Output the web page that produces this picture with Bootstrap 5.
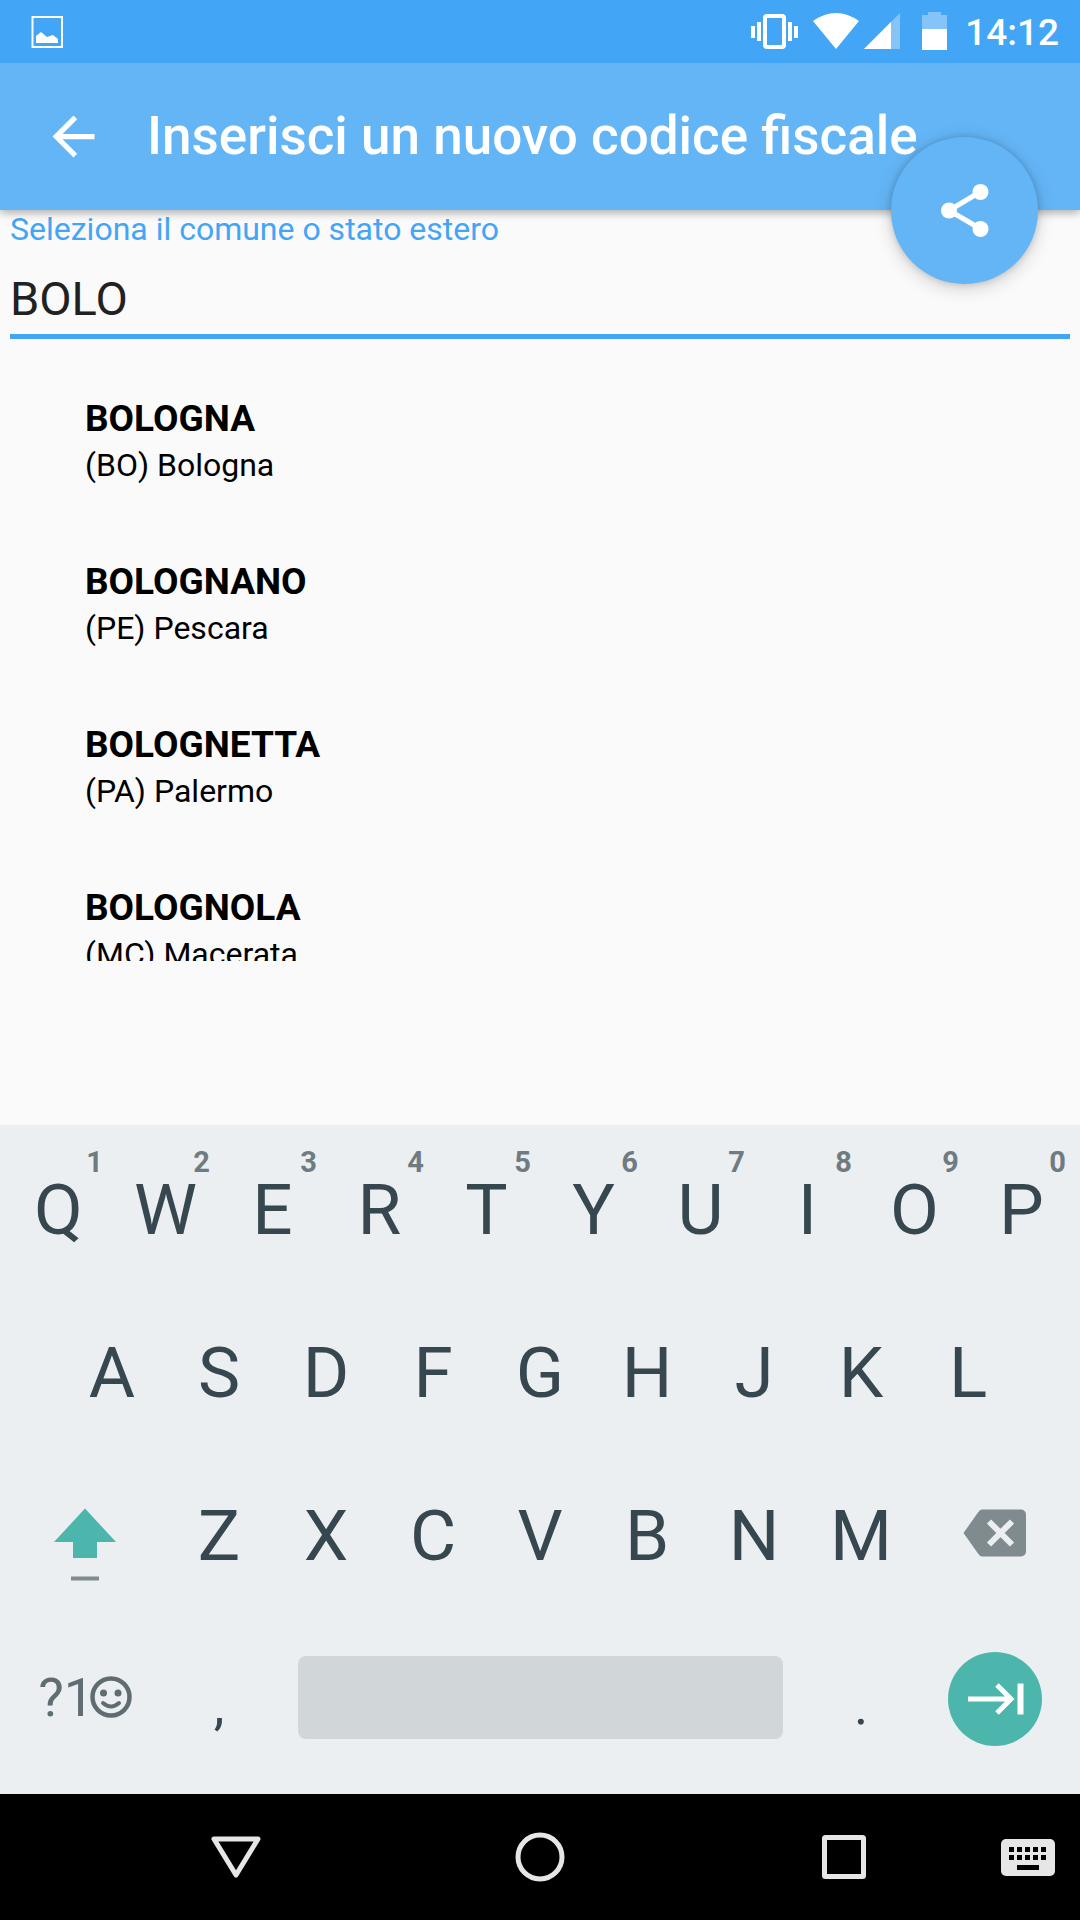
<!DOCTYPE html>
<html lang="it">
<head>
<meta charset="utf-8">
<meta name="viewport" content="width=device-width, initial-scale=1">
<title>Inserisci un nuovo codice fiscale</title>
<link href="https://cdn.jsdelivr.net/npm/bootstrap@5.3.0/dist/css/bootstrap.min.css" rel="stylesheet">
<style>
  body { font-family: Roboto, "Noto Sans", sans-serif; background: #fafafa; color: #000; }
  svg { display: block; flex: none; }
  .statusbar { height: 63px; padding: 0 21px 0 31px; background: #42a5f5; color: #fff; z-index: 3; }
  .clock { font-size: 37px; font-weight: 500; line-height: 40px; padding-top: 3px; margin-left: 16px; }
  .appbar { height: 147px; padding: 0 42px; gap: 42px; background: #64b5f6; color: #fff; box-shadow: 0 3px 8px rgba(0,0,0,.3); z-index: 2; }
  .appbar h1 { font-size: 53px; font-weight: 500; line-height: 64px; padding-bottom: 2px; white-space: nowrap; }
  .plain { border: 0; padding: 0; background: none; color: inherit; }
  .fab { width: 147px; height: 147px; right: 42px; top: 74px; border: 0; background: #64b5f6; box-shadow: 0 4px 18px rgba(0,0,0,.18), 0 0 6px rgba(0,0,0,.16); }
  .field-label { font-size: 32px; line-height: 38px; color: #42a5f5; }
  .town-input { font-size: 47px; line-height: 70px; padding: 16px 0 0; border: 0; border-bottom: 5px solid #42a5f5; border-radius: 0; background: none; color: #212121; outline: 0; }
  .form-area { padding: 0 10px; }
  .results { flex: 1 1 0; min-height: 0; margin: 20px 0 164px; }
  .results a { padding: 36px 85px 35px; color: #000; }
  .town { font-size: 37px; line-height: 48px; font-weight: 700; }
  .province { font-size: 32px; line-height: 44px; }
  .keyboard { background: #eceff1; color: #37474f; padding: 2px 5px 15px; }
  .key-row { height: 163px; }
  .key { flex: 1 1 0; min-width: 0; font-size: 71px; line-height: 80px; padding-top: 2px; }
  .key.wide { flex-grow: 1.5; padding-top: 0; }
  .key.punct { font-size: 54px; padding-top: 16px; }
  .key.symbols { font-size: 54px; color: #5f6c72; }
  .smiley { margin-left: -4px; }
  .half { flex: .5 1 0; }
  .hint { right: 9px; top: 18px; font-size: 29px; line-height: 34px; font-weight: 700; color: #6f7b80; }
  .space-slot { flex: 5 1 0; }
  .space-key { height: 83px; margin: 0 25px; border: 0; border-radius: 8px; background: #d1d6d9; }
  .navkeys { display: grid; grid-template-columns: 84fr 304fr 304fr 304fr 84fr; height: 126px; background: #000; color: #e6e6e6; }
  .navkeys .switcher { grid-column: 5; padding-right: 21px; }
</style>
</head>
<body class="d-flex flex-column vh-100 overflow-hidden">

<div class="statusbar d-flex align-items-center flex-shrink-0 position-relative">
  <svg class="me-auto" width="32" height="32" viewBox="0 0 32 32"><rect x="1.500" y="1" width="29.500" height="30" fill="none" stroke="#fff" stroke-width="2"/><path d="M5 27v-7l5-4 6 5 6-2 5 4v4z" fill="#fff"/></svg>
  <svg width="200" height="63" viewBox="749 0 200 63" fill="#fff">
    <path d="M751 26h4v12h-4zM757 22h4v19h-4zM788 22h4v19h-4zM794 26h4v12h-4z"/>
    <rect x="765" y="16" width="19" height="31" rx="2" fill="none" stroke="#fff" stroke-width="4"/>
    <path d="M813 21q23-16 46 0l-23 28z"/>
    <path d="M900 13v36h-36z" opacity=".35"/><path d="M891 22v27h-27z"/>
    <path d="M928 12h13v3h6v14h-25V15h6z" opacity=".35"/><path d="M922 29h25v21h-25z"/>
  </svg>
  <span class="clock">14:12</span>
</div>

<header class="appbar d-flex align-items-center flex-shrink-0 position-relative">
  <button class="plain" type="button" aria-label="Indietro">
    <svg width="63" height="63" viewBox="0 0 24 24" fill="#fff"><path d="M20 11H7.83l5.59-5.59L12 4l-8 8 8 8 1.41-1.41L7.83 13H20v-2z"/></svg>
  </button>
  <h1 class="m-0">Inserisci un nuovo codice fiscale</h1>
  <button class="fab rounded-circle position-absolute d-flex align-items-center justify-content-center p-0" type="button" aria-label="Condividi">
    <svg width="63" height="63" viewBox="0 0 63 63" fill="#fff"><path d="M47 13L16 31.500l31 18" fill="none" stroke="#fff" stroke-width="5"/><circle cx="47.500" cy="13" r="8"/><circle cx="16" cy="31.500" r="8"/><circle cx="47.500" cy="50" r="8"/></svg>
  </button>
</header>

<main class="d-flex flex-column flex-grow-1 overflow-hidden">
  <div class="form-area">
    <label class="field-label d-block" for="comune">Seleziona il comune o stato estero</label>
    <input class="town-input d-block w-100" id="comune" type="text" value="BOLO" autocomplete="off">
  </div>
  <div class="results overflow-hidden">
    <a class="d-block text-decoration-none" href="#"><div class="town">BOLOGNA</div><div class="province">(BO) Bologna</div></a>
    <a class="d-block text-decoration-none" href="#"><div class="town">BOLOGNANO</div><div class="province">(PE) Pescara</div></a>
    <a class="d-block text-decoration-none" href="#"><div class="town">BOLOGNETTA</div><div class="province">(PA) Palermo</div></a>
    <a class="d-block text-decoration-none" href="#"><div class="town">BOLOGNOLA</div><div class="province">(MC) Macerata</div></a>
  </div>
</main>

<section class="keyboard flex-shrink-0" aria-label="Tastiera">
  <div class="key-row d-flex">
    <button type="button" class="key plain position-relative">Q<span class="hint position-absolute">1</span></button>
    <button type="button" class="key plain position-relative">W<span class="hint position-absolute">2</span></button>
    <button type="button" class="key plain position-relative">E<span class="hint position-absolute">3</span></button>
    <button type="button" class="key plain position-relative">R<span class="hint position-absolute">4</span></button>
    <button type="button" class="key plain position-relative">T<span class="hint position-absolute">5</span></button>
    <button type="button" class="key plain position-relative">Y<span class="hint position-absolute">6</span></button>
    <button type="button" class="key plain position-relative">U<span class="hint position-absolute">7</span></button>
    <button type="button" class="key plain position-relative">I<span class="hint position-absolute">8</span></button>
    <button type="button" class="key plain position-relative">O<span class="hint position-absolute">9</span></button>
    <button type="button" class="key plain position-relative">P<span class="hint position-absolute">0</span></button>
  </div>
  <div class="key-row d-flex">
    <span class="half"></span>
    <button type="button" class="key plain">A</button>
    <button type="button" class="key plain">S</button>
    <button type="button" class="key plain">D</button>
    <button type="button" class="key plain">F</button>
    <button type="button" class="key plain">G</button>
    <button type="button" class="key plain">H</button>
    <button type="button" class="key plain">J</button>
    <button type="button" class="key plain">K</button>
    <button type="button" class="key plain">L</button>
    <span class="half"></span>
  </div>
  <div class="key-row d-flex">
    <button type="button" class="key wide plain d-flex align-items-center justify-content-center" aria-label="Maiuscole">
      <svg width="64" height="92" viewBox="0 0 64 92"><path d="M32 19.500L63 53H44v16H20V53H1z" fill="#4db6ac"/><path d="M18 87.500h28v4H18z" fill="#7f8b8f"/></svg>
    </button>
    <button type="button" class="key plain">Z</button>
    <button type="button" class="key plain">X</button>
    <button type="button" class="key plain">C</button>
    <button type="button" class="key plain">V</button>
    <button type="button" class="key plain">B</button>
    <button type="button" class="key plain">N</button>
    <button type="button" class="key plain">M</button>
    <button type="button" class="key wide plain d-flex align-items-center justify-content-center" aria-label="Cancella">
      <svg width="64" height="52" viewBox="0 0 64 52"><path d="M19 .5h39a5 5 0 0 1 5 5v37a5 5 0 0 1-5 5H19q-2 0-4-3L.5 24 15 3.500q2-3 4-3z" fill="#7f8b8f"/><path d="M26 12.500l23 23m0-23l-23 23" stroke="#eceff1" stroke-width="6"/></svg>
    </button>
  </div>
  <div class="key-row d-flex align-items-center">
    <button type="button" class="key wide symbols plain d-flex align-items-center justify-content-center" aria-label="Simboli ed emoji">?1<svg class="smiley" width="42" height="46" viewBox="0 0 42 46" fill="#5f6c72"><circle cx="21" cy="22" r="18.500" fill="none" stroke="#5f6c72" stroke-width="4.500"/><circle cx="13.500" cy="18" r="3.500"/><circle cx="28" cy="18" r="3.500"/><path d="M13 28q8 7 16 0" fill="none" stroke="#5f6c72" stroke-width="4" stroke-linecap="round"/></svg></button>
    <button type="button" class="key punct plain">,</button>
    <div class="space-slot d-flex"><button type="button" class="space-key flex-grow-1" aria-label="Spazio"></button></div>
    <button type="button" class="key punct plain">.</button>
    <button type="button" class="key wide plain d-flex align-items-center justify-content-center" aria-label="Avanti">
      <svg width="94" height="96" viewBox="0 -2 94 96"><circle cx="47" cy="47" r="47" fill="#4db6ac"/><path d="M20 47h44M49 33l14 14-14 14" fill="none" stroke="#fff" stroke-width="5"/><path d="M69.500 31.500h6v31h-6z" fill="#fff"/></svg>
    </button>
  </div>
</section>

<nav class="navkeys flex-shrink-0" aria-label="Navigazione">
  <span></span>
  <button type="button" class="plain d-flex align-items-center justify-content-center" aria-label="Indietro"><svg width="50" height="44" viewBox="0 0 50 44"><path d="M3 4h44L25 40z" fill="none" stroke="currentColor" stroke-width="5" stroke-linejoin="round"/></svg></button>
  <button type="button" class="plain d-flex align-items-center justify-content-center" aria-label="Home"><svg width="50" height="50" viewBox="0 0 50 50"><circle cx="25" cy="25" r="22" fill="none" stroke="currentColor" stroke-width="5"/></svg></button>
  <button type="button" class="plain d-flex align-items-center justify-content-center" aria-label="Recenti"><svg width="44" height="44" viewBox="0 0 44 44"><rect x="2.500" y="2.500" width="39" height="39" rx="1" fill="none" stroke="currentColor" stroke-width="5"/></svg></button>
  <button type="button" class="switcher plain d-flex align-items-center justify-content-center" aria-label="Cambia tastiera"><svg width="54" height="37" viewBox="0 0 54 37"><rect width="54" height="37" rx="5" fill="currentColor"/><path d="M8 8h5v5H8zM16 8h5v5h-5zM24 8h5v5h-5zM32 8h5v5h-5zM40 8h5v5h-5zM8 16h5v5H8zM16 16h5v5h-5zM24 16h5v5h-5zM32 16h5v5h-5zM40 16h5v5h-5zM16 26h22v5H16z" fill="#000"/></svg></button>
</nav>
<script src="https://cdn.jsdelivr.net/npm/bootstrap@5.3.0/dist/js/bootstrap.bundle.min.js"></script>
</body>
</html>
